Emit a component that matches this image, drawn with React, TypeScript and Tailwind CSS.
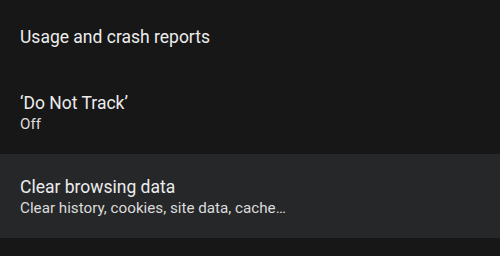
const rows = [
  { title: "Usage and crash reports" },
  { title: "\u2018Do Not Track\u2019", sub: "Off" },
  { title: "Clear browsing data", sub: "Clear history, cookies, site data, cache\u2026", active: true },
]

export default function App() {
  return (
    <div
      className="w-[500px] h-[256px] overflow-hidden bg-[#171717] text-[#ececec]"
      style={{ fontFamily: "Roboto, 'Noto Sans', sans-serif" }}
    >
      <div className="h-[70px] px-5 pt-[27px] text-[17.5px] leading-[21px]">{rows[0].title}</div>
      {rows.slice(1).map((r) => (
        <div
          key={r.title}
          className={`h-[84px] px-5 pt-[23px] flex flex-col ${r.active ? "bg-[#262729]" : ""}`}
        >
          <div className="text-[17.5px] leading-[21px]">{r.title}</div>
          <div className="text-[15.2px] leading-[20px] text-[#dcdcdc]">{r.sub}</div>
        </div>
      ))}
    </div>
  )
}
